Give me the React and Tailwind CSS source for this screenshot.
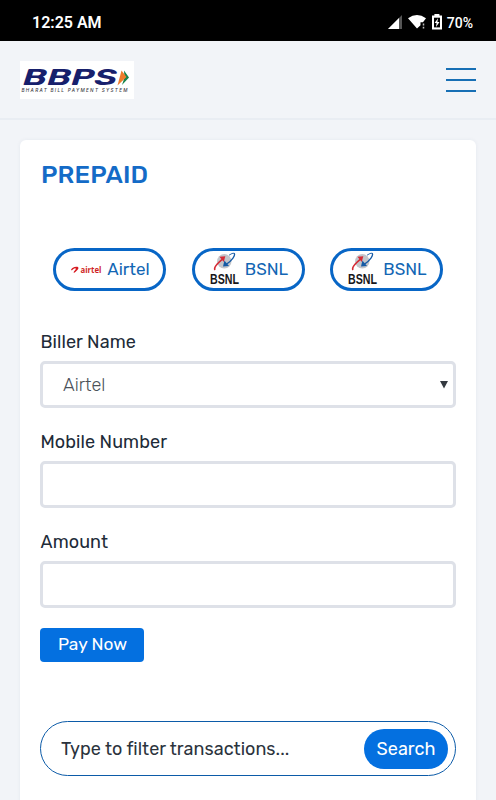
function BbpsLogo() {
  return (
    <svg className="block h-[38px] w-[114px] bg-white" viewBox="0 0 114 38" role="img" aria-label="BBPS">
      <text x="3" y="24.3" fontFamily="Rubik, 'Liberation Sans', sans-serif" fontStyle="italic" fontWeight="600" fontSize="21.5" fill="#17206c" textLength="94" lengthAdjust="spacingAndGlyphs">BBPS</text>
      <path d="M104 9.5 L109 16.5 L102 24 L104.5 16.5Z" fill="#16834a" />
      <path d="M101.5 9.5 L106.5 16 L97.5 24.5Z" fill="#ef7b2b" />
      <text x="1.5" y="31" fontFamily="Inter, 'Liberation Sans', sans-serif" fontStyle="italic" fontWeight="500" fontSize="4.6" fill="#3d3d48" textLength="106">BHARAT BILL PAYMENT SYSTEM</text>
    </svg>
  );
}

function AirtelLogo() {
  return (
    <svg className="block h-[14px] w-[32px] shrink-0" viewBox="0 0 32 14" role="img" aria-label="airtel">
      <path d="M1.2 7.3 Q.6 6.2 2.4 5 Q5 3.4 7.4 3.8 Q9.4 4.6 7.6 6.8 L5.4 9 Q4 10.4 3.6 9.4 Q3.6 8.4 5 7.2 Q6.6 5.6 5.4 5.3 Q4.2 5.3 2.8 6.5 Q1.7 7.6 1.2 7.3Z" fill="#d71920" />
      <text x="10.5" y="10" fontFamily="'Open Sans', sans-serif" fontWeight="700" fontSize="8.8" fill="#cf1f27" textLength="21" lengthAdjust="spacingAndGlyphs">airtel</text>
    </svg>
  );
}

function BsnlLogo() {
  return (
    <svg className="block h-[37px] w-[31px] shrink-0" viewBox="0 0 31 37" role="img" aria-label="BSNL">
      <circle cx="15.3" cy="10.3" r="7.2" fill="#c3c5ca" />
      <path d="M6 19 C4.5 17 8 12.5 14.5 7.3" fill="none" stroke="#d52a35" strokeWidth="1.6" />
      <path d="M10.5 5.8 L16.3 5.2 L14.8 11Z" fill="#d52a35" />
      <path d="M25 2.2 C27 4 23 9.5 17 13.5" fill="none" stroke="#155aa5" strokeWidth="1.3" />
      <path d="M15.4 9.6 L20 15 L14 15.4Z" fill="#155aa5" />
      <path d="M20 4.2 Q23.5 1.8 25 2.2" fill="none" stroke="#155aa5" strokeWidth=".9" />
      <text x="1" y="33.2" fontFamily="'Liberation Sans Narrow', 'Liberation Sans', sans-serif" fontWeight="700" fontSize="14.8" fill="#17171a" textLength="29" lengthAdjust="spacingAndGlyphs">BSNL</text>
    </svg>
  );
}

function StatusBar() {
  return (
    <div className="flex h-[41px] items-center justify-between bg-black pt-[4px] pr-[23px] pl-[32px] font-['Roboto',sans-serif] text-white">
      <span className="text-[16px] leading-5 font-semibold">12:25 AM</span>
      <div className="flex items-center">
        <svg className="-mt-[2px] h-[16px] w-[54px]" viewBox="0 0 54 16">
          <path d="M14 1 V15 H0Z" fill="#555" />
          <path d="M11 4 V15 H0Z" fill="#fff" />
          <path d="M20 4.2 Q29 -2 38 4.2 L35 8.2 H32.5 V11.2 L29 14.6Z" fill="#fff" />
          <path d="M35.5 9.5v2M35.5 12.8v1.6" stroke="#bbb" strokeWidth="1.5" />
          <path d="M44 1.6 H46.4 V0 H51.4 V1.6 H54 V15.5 H44Z" fill="#fff" />
          <path d="M46 3.7 H52 V13.4 H46Z" fill="#000" />
          <path d="M50 4.2 L46.6 9 H48.6 L48 13 L51.5 8 H49.4Z" fill="#fff" />
        </svg>
        <span className="ml-[5px] text-[14px] leading-5 font-medium">70%</span>
      </div>
    </div>
  );
}

function BillerPill({ logo, label }) {
  return (
    <button className="flex h-[43px] w-[113px] items-center justify-center gap-[5px] rounded-full border-[3px] border-[#0866c6] bg-white text-[17px] text-[#1266b4]">
      {logo}
      <span className="-mr-px">{label}</span>
    </button>
  );
}

function Field({ label, children }) {
  return (
    <div className="h-[100px]">
      <div className="mb-[7px] h-6 pl-[0.5px] text-[18px] leading-6 tracking-[0.08px] text-[#212b38]">{label}</div>
      <div className="flex h-[47px] items-center justify-between rounded-[5px] border-[3px] border-[#dee1e8] bg-white pr-[5px] pl-[20px]">{children}</div>
    </div>
  );
}

export default function App() {
  return (
    <div className="h-[800px] w-[496px] overflow-hidden bg-[#f2f4f8] font-['Rubik','Roboto',sans-serif]">
      <StatusBar />
      <header className="flex h-[79px] items-center justify-between border-b-2 border-[#e9edf3] pr-[20px] pl-[20px]">
        <BbpsLogo />
        <div className="flex w-[30px] flex-col gap-[9px]">
          <span className="h-[2px] bg-[#176fb5]" />
          <span className="h-[2px] bg-[#176fb5]" />
          <span className="h-[2px] bg-[#176fb5]" />
        </div>
      </header>
      <main className="mx-[20px] mt-[20px] h-[680px] rounded-[6px] bg-white px-[20px] pt-[19px] shadow-[0_0_4px_rgba(30,60,100,0.06)]">
        <h1 className="h-8 pl-px text-[25px] leading-8 font-medium tracking-[0.1px] text-[#146bc7]">PREPAID</h1>
        <div className="mt-[57px] ml-[13px] flex gap-[25.5px]">
          <BillerPill logo={<AirtelLogo />} label="Airtel" />
          <BillerPill logo={<BsnlLogo />} label="BSNL" />
          <BillerPill logo={<BsnlLogo />} label="BSNL" />
        </div>
        <div className="mt-[39px]">
          <Field label="Biller Name">
            <span className="pt-[2px] text-[18px] font-light text-[#4b5259]">Airtel</span>
            <svg className="h-[8px] w-[8px]" viewBox="0 0 8 8"><path d="M0 0H8L4 7.5Z" fill="#343a40" /></svg>
          </Field>
          <Field label="Mobile Number" />
          <Field label="Amount" />
        </div>
        <button className="mt-[-2px] flex h-[34px] w-[104px] items-center justify-center rounded-[4px] bg-[#0470e0] pb-px pl-px text-[17.3px] text-white">Pay Now</button>
        <div className="mt-[59px] flex h-[55px] w-[416px] items-center justify-between rounded-full border border-[#0c5ba8] pr-[7px] pl-[20px]">
          <span className="pt-[2px] text-[18px] tracking-[0.03px] text-[#2b333d]">Type to filter transactions...</span>
          <button className="h-[40px] w-[84px] rounded-full bg-[#0470e0] pt-px text-[18px] text-white">Search</button>
        </div>
      </main>
    </div>
  );
}
